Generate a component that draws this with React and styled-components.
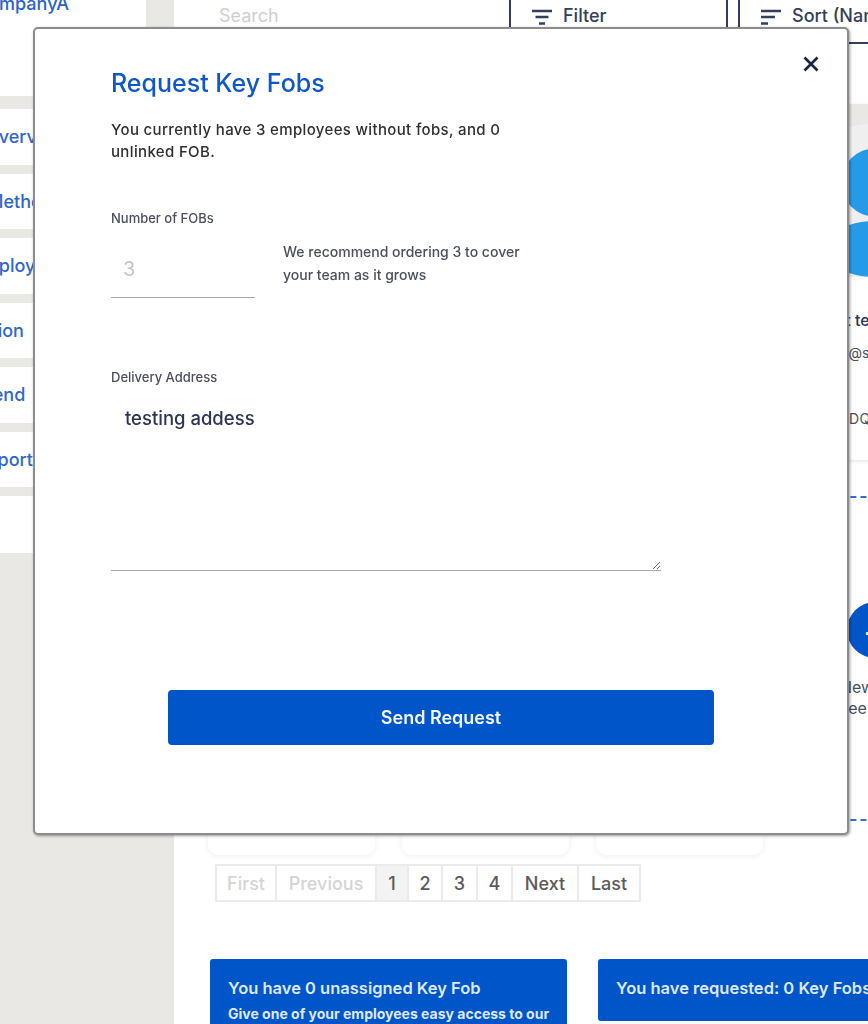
import styled, { createGlobalStyle } from "styled-components";

const BLUE = "#0055c8";
const NAVY = "#333d5c";
const GREY_BG = "#e9e8e4";

const GlobalStyle = createGlobalStyle`
  html, body {
    margin: 0;
    padding: 0;
    overflow: hidden;
  }
  body {
    font-family: "Inter", "Noto Sans", "Liberation Sans", sans-serif;
    background: ${GREY_BG};
  }
`;

const navItems = [
  { label: "Overview", shift: 15 },
  { label: "Payment Methods", shift: 93 },
  { label: "Employees", shift: 28 },
  { label: "Subscription", shift: 85 },
  { label: "Spend", shift: 30 },
  { label: "Support", shift: 36 },
];

const pages = [
  { label: "First", width: 62, muted: true },
  { label: "Previous", width: 100, muted: true },
  { label: "1", width: 32, active: true },
  { label: "2", width: 34 },
  { label: "3", width: 35 },
  { label: "4", width: 35 },
  { label: "Next", width: 66 },
  { label: "Last", width: 62 },
];

const FilterIcon = () => (
  <svg width="22" height="18" viewBox="0 0 22 18" fill="none" stroke={NAVY} strokeWidth="2.4">
    <path d="M1 3h20M4.500 9h13M8 15.500h6" />
  </svg>
);

const SortIcon = () => (
  <svg width="22" height="18" viewBox="0 0 22 18" fill="none" stroke={NAVY} strokeWidth="2.4">
    <path d="M1 15.500h7M1 9h14M1 3h20" />
  </svg>
);

const CloseIcon = () => (
  <svg width="16" height="16" viewBox="0 0 16 16" fill="none" stroke="#1a2340" strokeWidth="2.6">
    <path d="M1.500 1.500l13 13M14.500 1.500l-13 13" />
  </svg>
);

const Avatar = () => (
  <AvatarSvg viewBox="0 0 167 173">
    <rect width="167" height="173" fill="#efefef" />
    <path d="M0 0h167v8C120 14 50 22 0 34z" fill={GREY_BG} />
    <circle cx="85" cy="78.500" r="34" fill="#259ae6" />
    <ellipse cx="85" cy="145" rx="52" ry="28" fill="#259ae6" />
  </AvatarSvg>
);

export default function App() {
  return (
    <Page>
      <GlobalStyle />
      <Sidebar>
        <Brand>CompanyA</Brand>
        <Nav>
          {navItems.map((item) => (
            <NavRow key={item.label}>
              <NavLabel $shift={item.shift}>{item.label}</NavLabel>
            </NavRow>
          ))}
          <NavRow $tall />
        </Nav>
      </Sidebar>

      <Main>
        <Toolbar>
          <SearchBox placeholder="Search" readOnly />
          <ToolButton>
            <FilterIcon />
            Filter
          </ToolButton>
          <ToolButton>
            <SortIcon />
            Sort (Name)
          </ToolButton>
        </Toolbar>

        <CardGrid>
          <GhostCard />
          <GhostCard />
          <GhostCard />
          <EmployeeColumn>
            <EmployeeCard>
              <Avatar />
              <EmployeeName>Test test</EmployeeName>
              <EmployeeMeta>test@spark.com</EmployeeMeta>
              <EmployeeCode>DQ7F2K</EmployeeCode>
            </EmployeeCard>
            <Dashed $gap={36} />
            <AddCircle>+</AddCircle>
            <AddTitle>New</AddTitle>
            <AddSub>Employee</AddSub>
            <Dashed $gap={100} />
          </EmployeeColumn>
        </CardGrid>

        <Pagination>
          {pages.map((p) => (
            <PageCell key={p.label} $muted={p.muted} $active={p.active} style={{ width: p.width }}>
              {p.label}
            </PageCell>
          ))}
        </Pagination>

        <Banners>
          <Banner>
            <BannerTitle>You have 0 unassigned Key Fob</BannerTitle>
            <BannerText>Give one of your employees easy access to our</BannerText>
          </Banner>
          <Banner $short>
            <BannerTitle>You have requested: 0 Key Fobs</BannerTitle>
          </Banner>
        </Banners>
      </Main>

      <Modal>
        <CloseButton aria-label="Close">
          <CloseIcon />
        </CloseButton>
        <Title>Request Key Fobs</Title>
        <Intro>You currently have 3 employees without fobs, and 0 unlinked FOB.</Intro>
        <FieldLabel $gap={47}>Number of FOBs</FieldLabel>
        <FobRow>
          <FobInput placeholder="3" readOnly />
          <Hint>We recommend ordering 3 to cover your team as it grows</Hint>
        </FobRow>
        <FieldLabel $gap={71}>Delivery Address</FieldLabel>
        <AddressInput defaultValue="testing addess" />
        <SendButton>Send Request</SendButton>
      </Modal>
    </Page>
  );
}

const Page = styled.div`
  display: flex;
  width: 868px;
  height: 1024px;
  overflow: hidden;
  background: ${GREY_BG};
`;

const Sidebar = styled.aside`
  flex: none;
  width: 146px;
  height: 553px;
  margin-right: 28px;
  background: #fff;
`;

const Brand = styled.div`
  height: 104px;
  margin: -8px 0 0 -25px;
  color: #2a62c9;
  font-size: 18px;
  font-weight: 500;
  line-height: 24px;
`;

const Nav = styled.nav`
  display: flex;
  flex-direction: column;
  gap: 9px;
  padding-top: 13px;
  background: ${GREY_BG};
`;

const NavRow = styled.div`
  display: flex;
  align-items: center;
  height: ${(p) => (p.$tall ? "57px" : "55.5px")};
  background: #fff;
`;

const NavLabel = styled.span`
  margin-left: ${(p) => -p.$shift}px;
  color: #2f66cc;
  font-size: 18px;
  font-weight: 500;
  white-space: nowrap;
`;

const Main = styled.main`
  flex: none;
  width: 694px;
  height: 1024px;
  overflow: hidden;
  background: #fff;
`;

const Toolbar = styled.div`
  display: flex;
  gap: 10px;
  width: 900px;
  height: 44px;
`;

const SearchBox = styled.input`
  box-sizing: border-box;
  width: 325px;
  height: 30px;
  padding: 0 0 0 45px;
  border: 0;
  outline: 0;
  background: transparent;
  font: 400 18px "Inter", sans-serif;
  &::placeholder {
    color: #cfcfcf;
  }
`;

const ToolButton = styled.div`
  box-sizing: border-box;
  display: flex;
  align-items: flex-start;
  gap: 10px;
  width: 219px;
  height: 44px;
  padding: 5px 0 0 20px;
  border: 2px solid ${NAVY};
  border-top: 0;
  color: ${NAVY};
  font-size: 18px;
  font-weight: 500;
  line-height: 22px;
  white-space: nowrap;
  svg {
    margin-top: 3px;
  }
`;

const CardGrid = styled.div`
  display: grid;
  grid-template-columns: repeat(4, 167px);
  column-gap: 27px;
  align-items: end;
  width: 800px;
  height: 751px;
  margin: 60px 0 0 34px;
`;

const GhostCard = styled.div`
  height: 120px;
  border-radius: 0 0 10px 10px;
  background: #fff;
  box-shadow: 0 1px 6px rgba(0, 0, 0, 0.07);
`;

const EmployeeColumn = styled.div`
  align-self: start;
  display: flex;
  flex-direction: column;
`;

const EmployeeCard = styled.div`
  height: 356px;
  border-radius: 10px;
  background: #fff;
  box-shadow: 0 1px 4px rgba(0, 0, 0, 0.12);
  overflow: hidden;
`;

const AvatarSvg = styled.svg`
  display: block;
  width: 167px;
  height: 173px;
`;

const EmployeeName = styled.div`
  margin: 32px 0 0 28px;
  color: #2d3552;
  font-size: 16px;
  font-weight: 500;
  line-height: 22px;
  white-space: nowrap;
`;

const EmployeeMeta = styled.div`
  margin: 12px 0 0 34px;
  color: #4a4f5e;
  font-size: 14px;
  line-height: 20px;
  white-space: nowrap;
`;

const EmployeeCode = styled(EmployeeMeta)`
  margin: 46px 0 0 59px;
  letter-spacing: 0.5px;
`;

const Dashed = styled.div`
  height: 0;
  margin-top: ${(p) => p.$gap}px;
  border-top: 2px dashed #2f6fd0;
`;

const AddCircle = styled.div`
  display: flex;
  align-items: center;
  justify-content: center;
  width: 56px;
  height: 56px;
  margin: 104px 0 0 57px;
  border-radius: 50%;
  background: ${BLUE};
  color: #fff;
  font-size: 38px;
  line-height: 1;
`;

const AddTitle = styled.div`
  margin: 19px 0 0 50px;
  color: #4a4f5e;
  font-size: 16px;
  line-height: 21px;
  white-space: nowrap;
`;

const AddSub = styled(AddTitle)`
  margin: 0 0 0 3px;
`;

const Pagination = styled.div`
  display: flex;
  width: max-content;
  height: 38px;
  margin: 9px 0 0 41px;
`;

const PageCell = styled.div`
  box-sizing: border-box;
  display: flex;
  align-items: center;
  justify-content: center;
  border: 2px solid #ebebeb;
  background: ${(p) => (p.$active ? "#f3f3f3" : "#fff")};
  color: ${(p) => (p.$muted ? "#d4d4d4" : "#5a5a5a")};
  font-size: 18px;
  font-weight: 500;
  & + & {
    border-left: 0;
  }
`;

const Banners = styled.div`
  display: flex;
  align-items: flex-start;
  gap: 31px;
  width: 800px;
  margin: 57px 0 0 36px;
`;

const Banner = styled.div`
  flex: none;
  box-sizing: border-box;
  width: 357px;
  height: ${(p) => (p.$short ? "62px" : "120px")};
  padding: 17px 18px;
  border-radius: 3px;
  background: ${BLUE};
  color: #dfe8f8;
`;

const BannerTitle = styled.div`
  font-size: 16.500px;
  font-weight: 600;
  line-height: 24px;
  white-space: nowrap;
`;

const BannerText = styled.div`
  margin-top: 3px;
  font-size: 14px;
  font-weight: 700;
  line-height: 22px;
  white-space: nowrap;
`;

const Modal = styled.section`
  position: fixed;
  left: 33px;
  top: 27px;
  box-sizing: border-box;
  width: 816px;
  height: 808px;
  padding: 38px 0 0 76px;
  border: 2px solid #8c8c8c;
  border-radius: 5px;
  background: #fff;
  box-shadow: 1px 1px 3px rgba(0, 0, 0, 0.4);
`;

const CloseButton = styled.button`
  position: absolute;
  right: 28px;
  top: 27px;
  display: flex;
  padding: 0;
  border: 0;
  background: none;
`;

const Title = styled.h2`
  margin: 0;
  color: #0f58c6;
  font-size: 25px;
  font-weight: 500;
  line-height: 32px;
`;

const Intro = styled.p`
  width: 400px;
  margin: 20px 0 0;
  color: #2f2f2f;
  font-size: 15px;
  font-weight: 500;
  letter-spacing: 0.35px;
  line-height: 22px;
`;

const FieldLabel = styled.label`
  display: block;
  margin-top: ${(p) => p.$gap}px;
  color: #4b4f5c;
  font-size: 13px;
  font-weight: 500;
  line-height: 16px;
`;

const FobRow = styled.div`
  display: flex;
  gap: 28px;
  margin-top: 14px;
`;

const FobInput = styled.input`
  box-sizing: border-box;
  width: 144px;
  height: 58px;
  padding: 0 12px;
  border: 0;
  border-bottom: 1px solid #a8a8a8;
  outline: 0;
  font: 400 20px "Inter", sans-serif;
  &::placeholder {
    color: #c4c4c4;
  }
`;

const Hint = styled.p`
  width: 250px;
  margin: 0;
  color: #4b4f5c;
  font-size: 14px;
  font-weight: 500;
  line-height: 23px;
`;

const AddressInput = styled.textarea`
  display: block;
  box-sizing: border-box;
  width: 550px;
  height: 176px;
  margin-top: 10px;
  padding: 10px 14px;
  border: 0;
  border-bottom: 1px solid #a8a8a8;
  outline: 0;
  color: #2d3552;
  font: 500 18.500px/27px "Inter", sans-serif;
`;

const SendButton = styled.button`
  display: block;
  width: 546px;
  height: 55px;
  margin: 119px 0 0 57px;
  border: 0;
  border-radius: 4px;
  background: ${BLUE};
  color: #f2f6ff;
  font: 600 18px "Inter", sans-serif;
`;
